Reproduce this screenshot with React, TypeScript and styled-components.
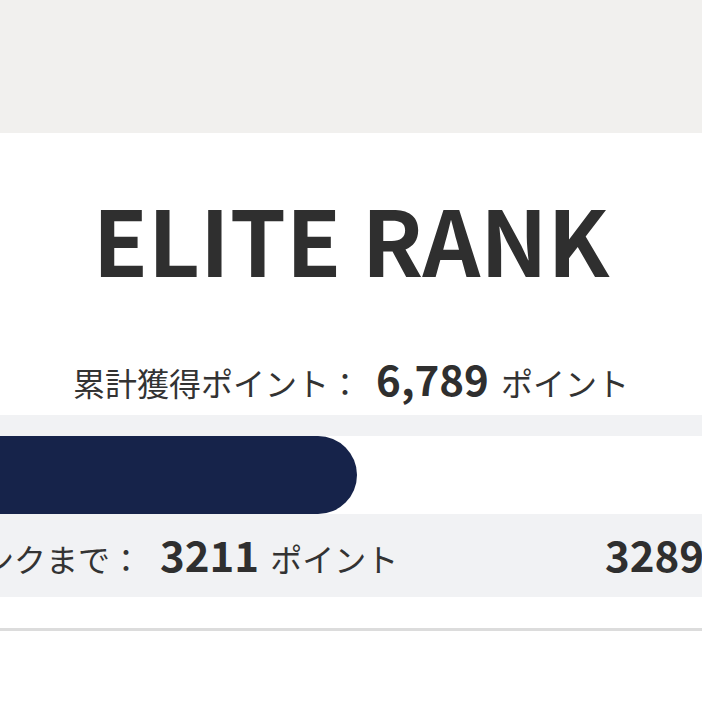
import React from "react";
import styled, { createGlobalStyle } from "styled-components";

const Global = createGlobalStyle`
  html, body { margin: 0; padding: 0; background: #ffffff; }
  body { font-family: "Noto Sans CJK JP", "Noto Sans", sans-serif; color: #333333; }
  #root { width: 702px; height: 702px; overflow: hidden; }
`;

const Page = styled.div`
  width: 702px;
  height: 702px;
  overflow: hidden;
  background: #ffffff;
`;

const TopBand = styled.div`
  height: 133px;
  background: #f1f0ee;
`;

const Card = styled.section`
  background: #ffffff;
  padding: 60px 0 31px;
  border-bottom: 3px solid #dcdcdc;
`;

const RankTitle = styled.h1`
  margin: 0;
  font-size: 90px;
  line-height: 1;
  font-weight: 700;
  text-align: center;
  color: #2f2f2f;
  letter-spacing: 0;
`;

const TotalLine = styled.div`
  margin-top: 74px;
  display: flex;
  justify-content: center;
  align-items: baseline;
  line-height: 1;
  height: 44px;
`;

const Label = styled.span`
  font-size: 32px;
  font-weight: 400;
  color: #333333;
`;

const Number = styled.span<{ $left?: number; $right?: number }>`
  font-size: 42px;
  font-weight: 700;
  color: #2f2f2f;
  margin: 0 ${(p) => p.$right ?? 12}px 0 ${(p) => p.$left ?? 15}px;
`;

const Progress = styled.div`
  margin-top: 14px;
  background: #f1f2f4;
  padding-top: 21px;
`;

const Track = styled.div`
  height: 78px;
  background: #ffffff;
`;

const Fill = styled.div`
  height: 100%;
  background: #16234a;
  border-radius: 0 39px 39px 0;
`;

const Labels = styled.div`
  box-sizing: border-box;
  height: 83px;
  padding-bottom: 4px;
  display: flex;
  align-items: center;
  justify-content: space-between;
  margin: 0 -2px 0 -114px;
  line-height: 1;
  white-space: nowrap;
`;

const Remain = styled.div`
  display: flex;
  align-items: baseline;
`;

export default function App() {
  const fillWidth = 357;
  return (
    <Page>
      <Global />
      <TopBand />
      <Card>
        <RankTitle>ELITE RANK</RankTitle>
        <TotalLine>
          <Label>累計獲得ポイント：</Label>
          <Number>6,789</Number>
          <Label>ポイント</Label>
        </TotalLine>
        <Progress>
          <Track>
            <Fill style={{ width: fillWidth }} />
          </Track>
          <Labels>
            <Remain>
              <Label>次のランクまで：</Label>
              <Number $left={18} $right={11}>3211</Number>
              <Label>ポイント</Label>
            </Remain>
            <Number $left={0} $right={0}>3289</Number>
          </Labels>
        </Progress>
      </Card>
    </Page>
  );
}
